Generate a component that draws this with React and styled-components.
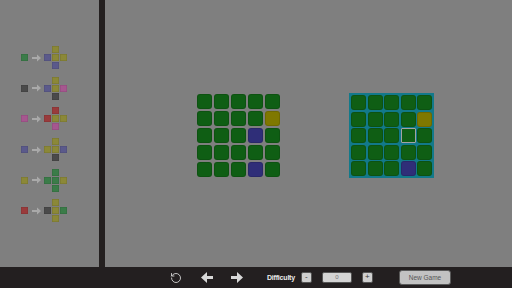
import React from "react";
import styled, { createGlobalStyle } from "styled-components";
import { RotateCcw } from "lucide-react";

const Global = createGlobalStyle`
    html, body { margin: 0; padding: 0; background: #7f7f7f; }
    body { font-family: "Liberation Sans", Arial, sans-serif; }
`;

const C = {
    g: "#3b7c49",
    y: "#8b8838",
    b: "#5b5a8b",
    p: "#a6578f",
    r: "#993b3c",
    k: "#4a4a4a",
};

// single, then cross: top, left, center, right, bottom
const legend = [
    ["g", "y", "b", "y", "y", "b"],
    ["k", "y", "b", "y", "p", "k"],
    ["p", "r", "r", "y", "y", "p"],
    ["b", "y", "y", "y", "b", "k"],
    ["y", "g", "g", "g", "y", "g"],
    ["r", "y", "k", "y", "g", "y"],
];

const T = { G: "#0f5e14", Y: "#7f7800", B: "#2f2e78" };

const leftBoard = [
    "GGGGG",
    "GGGGY",
    "GGGBG",
    "GGGGG",
    "GGGBG",
];
const rightBoard = [
    "GGGGG",
    "GGGGY",
    "GGGGG",
    "GGGGG",
    "GGGBG",
];

const Arrow = () => (
    <svg width="9" height="8" viewBox="0 0 9 8">
        <polygon points="0,3 5,3 5,0.5 9,4 5,7.5 5,5 0,5" fill="#a9a9a9" />
    </svg>
);

const NavArrow = ({ dir }) => (
    <svg width="12" height="11" viewBox="0 0 12 11" style={{ transform: dir === "left" ? "scaleX(-1)" : "none" }}>
        <polygon points="0,4 6,4 6,0 12,5.5 6,11 6,7 0,7" fill="#d8d8d8" />
    </svg>
);

const App = () => {
    return (
        <Page>
            <Global />
            <Main>
                <Sidebar>
                    {legend.map((row, i) => (
                        <LegendItem key={i}>
                            <Swatch color={C[row[0]]} />
                            <ArrowWrap><Arrow /></ArrowWrap>
                            <Cross>
                                <span />
                                <Swatch color={C[row[1]]} />
                                <span />
                                <Swatch color={C[row[2]]} />
                                <Swatch color={C[row[3]]} />
                                <Swatch color={C[row[4]]} />
                                <span />
                                <Swatch color={C[row[5]]} />
                                <span />
                            </Cross>
                        </LegendItem>
                    ))}
                </Sidebar>
                <Divider />
                <Field>
                    <Board>
                        {leftBoard.join("").split("").map((c, i) => (
                            <Tile key={i} color={T[c]} />
                        ))}
                    </Board>
                    <TargetBoard>
                        {rightBoard.join("").split("").map((c, i) => (
                            <Tile key={i} color={T[c]} selected={i === 13} />
                        ))}
                    </TargetBoard>
                </Field>
            </Main>
            <Bar>
                <IconBtn gap={17}><RotateCcw size={12} color="#d4d4d4" strokeWidth={1.8} /></IconBtn>
                <IconBtn gap={16}><NavArrow dir="left" /></IconBtn>
                <IconBtn gap={23}><NavArrow dir="right" /></IconBtn>
                <Label>Difficulty</Label>
                <SmallBtn>-</SmallBtn>
                <NumBox>0</NumBox>
                <SmallBtn>+</SmallBtn>
                <GameBtn>New Game</GameBtn>
            </Bar>
        </Page>
    );
};
export default App;

const Page = styled.div`
    width: 512px;
    height: 288px;
    display: flex;
    flex-direction: column;
    background: #7f7f7f;
    overflow: hidden;
`;

const Main = styled.div`
    flex: 1;
    display: flex;
    min-height: 0;
`;

const Sidebar = styled.div`
    width: 99px;
    display: flex;
    flex-direction: column;
    gap: 7.7px;
    padding: 46px 0 0 21px;
    box-sizing: border-box;
`;

const LegendItem = styled.div`
    display: flex;
    align-items: center;
    height: 23px;
`;

const Swatch = styled.div`
    width: 7px;
    height: 7px;
    background: ${(p) => p.color};
    box-shadow: inset 0 0 0 0.5px rgba(0,0,0,0.15);
`;

const ArrowWrap = styled.div`
    margin: 0 3px 0 4px;
    display: flex;
`;

const Cross = styled.div`
    display: grid;
    grid-template-columns: repeat(3, 7px);
    grid-template-rows: repeat(3, 7px);
    gap: 1px;
`;

const Divider = styled.div`
    width: 6px;
    background: #242020;
`;

const Field = styled.div`
    flex: 1;
    display: flex;
    align-items: flex-start;
    padding: 93px 0 0 92px;
    gap: 69px;
`;

const Board = styled.div`
    display: grid;
    grid-template-columns: repeat(5, 15px);
    grid-auto-rows: 15px;
    gap: 2px;
    padding: 1px 0;
`;

const TargetBoard = styled(Board)`
    background: #12798a;
    padding: 2px;
    gap: 1.5px;
`;

const Tile = styled.div`
    background: ${(p) => p.color};
    box-sizing: border-box;
    border: 1px solid ${(p) => (p.selected ? "#a3a3a3" : "rgba(0,0,0,0.12)")};
    border-radius: ${(p) => (p.selected ? "1px" : "3px")};
`;

const Bar = styled.div`
    height: 21px;
    background: #231f20;
    display: flex;
    align-items: center;
    padding-left: 169px;
`;

const IconBtn = styled.div`
    width: 14px;
    display: flex;
    justify-content: center;
    margin-right: ${(p) => p.gap}px;
`;

const Label = styled.div`
    font-size: 7px;
    font-weight: bold;
    color: #ececec;
    margin-right: 6px;
    letter-spacing: -0.2px;
`;

const SmallBtn = styled.div`
    width: 9px;
    height: 9px;
    border-radius: 2px;
    background: #cfcfcf;
    border: 1px solid #555;
    color: #333;
    font-size: 8px;
    line-height: 8px;
    text-align: center;
`;

const NumBox = styled.div`
    width: 28px;
    height: 9px;
    margin: 0 10px;
    border-radius: 2px;
    background: #d4d4d4;
    border: 1px solid #555;
    color: #777;
    font-size: 6px;
    line-height: 9px;
    text-align: center;
`;

const GameBtn = styled.div`
    margin-left: 26px;
    width: 50px;
    height: 13px;
    border-radius: 3px;
    background: #c2c2c2;
    border: 1px solid #5a5a5a;
    color: #555;
    font-size: 6.5px;
    line-height: 13px;
    text-align: center;
`;
